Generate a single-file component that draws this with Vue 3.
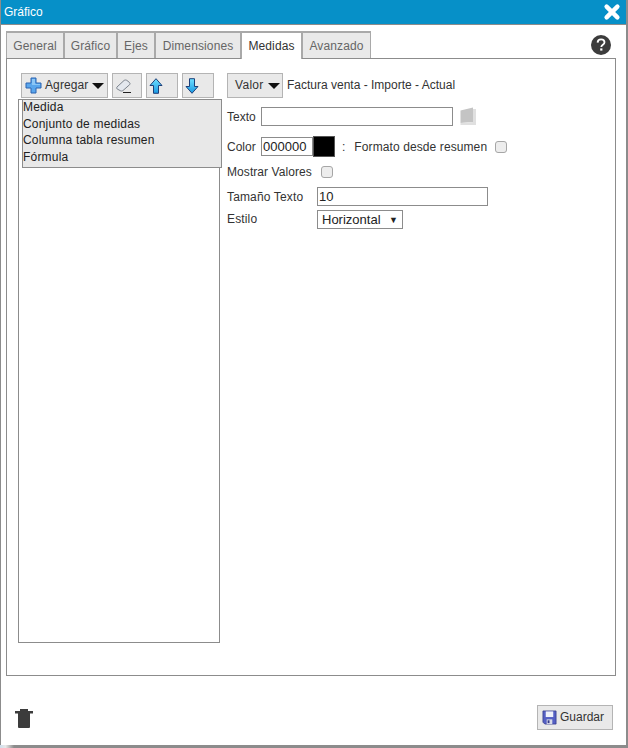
<script setup>
const tabs = [
  { label: 'General', w: 58 },
  { label: 'Gráfico', w: 53 },
  { label: 'Ejes', w: 38 },
  { label: 'Dimensiones', w: 86 },
  { label: 'Medidas', w: 61, active: true },
  { label: 'Avanzado', w: 69 }
]
const menu = ['Medida', 'Conjunto de medidas', 'Columna tabla resumen', 'Fórmula']
</script>

<template>
  <div class="dialog">
    <header class="titlebar">
      <span>Gráfico</span>
      <svg class="close" width="18" height="18" viewBox="0 0 18 18"><path d="M3.6 3.6 L14.4 14.4 M14.4 3.6 L3.6 14.4" stroke="#fff" stroke-width="4.4" stroke-linecap="round" /></svg>
    </header>
    <div class="body">
      <div class="tabbar">
        <button v-for="t in tabs" :key="t.label" class="tab" :class="{ active: t.active }" :style="{ width: t.w + 'px' }">{{ t.label }}</button>
        <svg class="help" width="20" height="20" viewBox="0 0 20 20">
          <circle cx="10" cy="10" r="10" fill="#3c3c3c" />
          <path d="M6.6 7.6 C6.7 5.4 8.2 4.3 10.1 4.3 C12.1 4.3 13.5 5.5 13.5 7.2 C13.5 9.7 10.3 9.8 10.3 12" fill="none" stroke="#fff" stroke-width="1.8" />
          <rect x="9.2" y="13.4" width="2.2" height="2.2" fill="#fff" />
        </svg>
      </div>
      <div class="panel">
        <div class="left">
          <div class="toolbar">
            <button class="btn add">
              <svg width="17" height="17" viewBox="0 0 17 17"><path d="M6 1 H11 V6 H16 V11 H11 V16 H6 V11 H1 V6 H6 Z" fill="#5aa6ec" stroke="#2a62b0" /><path d="M7 2 H10 V7 H15 V8 H7 Z" fill="#8cc6f5" /></svg>
              <span class="lift">Agregar</span><i class="caret"></i>
            </button>
            <button class="btn eraser">
              <svg width="15" height="14" viewBox="0 0 15 14"><path d="M1 8 L8 1.5 C9 0.8 10 0.8 11 1.5 L13.5 3.5 C14.2 4.2 14.2 5 13.5 5.8 L7 11.5 C6 12.2 5 12.2 4 11.5 L1.2 10 C0.6 9.4 0.5 8.6 1 8 Z" fill="#e4e8ee" stroke="#7b828c" /><path d="M7 13.5 H15" stroke="#222" /></svg>
            </button>
            <button class="btn arrow">
              <svg width="14" height="16" viewBox="0 0 14 16">
                <defs><linearGradient id="arrow-up" x1="0" y1="0" x2="0" y2="1"><stop offset="0" stop-color="#6fe0ff" /><stop offset="1" stop-color="#1a98e2" /></linearGradient></defs>
                <path d="M7 0.7 L13 7.5 H9.5 V15.3 H4.5 V7.5 H1 Z" fill="url(#arrow-up)" stroke="#1c3f7a" />
              </svg>
            </button>
            <button class="btn arrow">
              <svg width="14" height="16" viewBox="0 0 14 16">
                <defs><linearGradient id="arrow-down" x1="0" y1="0" x2="0" y2="1"><stop offset="0" stop-color="#6fe0ff" /><stop offset="1" stop-color="#1a98e2" /></linearGradient></defs>
                <path d="M7 15.3 L13 8.5 H9.5 V0.7 H4.5 V8.5 H1 Z" fill="url(#arrow-down)" stroke="#1c3f7a" />
              </svg>
            </button>
          </div>
          <div class="listbox"></div>
          <ul class="menu">
            <li v-for="m in menu" :key="m">{{ m }}</li>
          </ul>
        </div>
        <div class="right">
          <div class="valor-row">
            <button class="btn valor"><span class="lift">Valor</span><i class="caret"></i></button>
            <span class="value-name lift">Factura venta - Importe - Actual</span>
          </div>
          <div class="row texto-row">
            <label class="lab-texto">Texto</label>
            <input class="input texto" type="text" />
            <svg class="book" width="17" height="19" viewBox="0 0 17 19"><path d="M0.5 3.5 L13 0.5 V15 L0.5 16 Z" fill="#c4c4c4" /><path d="M13 2 H16 V18 H0.5 V16 L13 15 Z" fill="#e0e0e0" /></svg>
          </div>
          <div class="row color-row">
            <label class="lab-color">Color</label>
            <input class="input color" type="text" value="000000" />
            <span class="swatch"></span>
            <span class="colon">:</span>
            <span class="fmt-label">Formato desde resumen</span>
            <span class="check fmt"></span>
          </div>
          <div class="row mostrar-row">
            <span class="mostrar-label">Mostrar Valores</span>
            <span class="check mostrar"></span>
          </div>
          <div class="row size-row">
            <label class="lab-wide">Tamaño Texto</label>
            <input class="input size" type="text" value="10" />
          </div>
          <div class="row estilo-row">
            <label class="lab-wide lift">Estilo</label>
            <div class="select"><span>Horizontal</span><span class="sel-arrow">▼</span></div>
          </div>
        </div>
      </div>
      <footer class="footer">
        <svg class="trash" width="18" height="19" viewBox="0 0 18 19"><path d="M5 0 H13 V2 H18 V4.5 H15 V18 Q15 19 14 19 H4 Q3 19 3 18 V4.5 H0 V2 H5 Z" fill="#3c3c3c" /></svg>
        <button class="btn save">
          <svg width="15" height="15" viewBox="0 0 16 16"><path d="M1 1 H15 V15 H3 L1 13 Z" fill="#5560c4" stroke="#33398a" stroke-width="0.8" /><rect x="4" y="1.5" width="8" height="6" fill="#eef0fa" /><rect x="5" y="10" width="6" height="5" fill="#d8dbe8" /><rect x="6" y="11" width="2" height="3" fill="#33398a" /></svg>
          <span class="lift">Guardar</span>
        </button>
      </footer>
    </div>
    <span class="corner"></span>
  </div>
</template>

<style>
html, body { margin: 0; padding: 0; background: #fff; }
</style>

<style scoped>
.dialog {
  position: relative;
  width: 628px;
  height: 748px;
  box-sizing: border-box;
  display: flex;
  flex-direction: column;
  border-left: 1px solid #8c8c8c;
  border-right: 2px solid #8c8c8c;
  border-bottom: 3px solid #8c8c8c;
  font-family: "Liberation Sans", Arial, sans-serif;
  font-size: 12px;
  color: #333;
  background: #fff;
}
.corner {
  position: absolute;
  left: -1px;
  bottom: -3px;
  width: 14px;
  height: 3px;
  background: linear-gradient(90deg, #cfdfee, #e8e8e8 40%, #8c8c8c);
}
.titlebar {
  height: 24px;
  flex: none;
  box-sizing: content-box;
  background: #0690c8;
  border-bottom: 1px solid #8c8c8c;
  color: #fff;
  font-size: 12px;
  display: flex;
  align-items: center;
  justify-content: space-between;
  padding: 0 5px 0 3px;
}
.close { margin-top: -1px; }
.body {
  flex: 1;
  display: flex;
  flex-direction: column;
  padding: 6px 10px 0 5px;
  min-height: 0;
}
.tabbar {
  height: 27px;
  flex: none;
  display: flex;
  position: relative;
}
.tab {
  box-sizing: border-box;
  height: 27px;
  padding: 0;
  border: 2px solid #a9a9a9;
  border-bottom: 0;
  border-right-width: 1px;
  border-left-width: 1px;
  background: #e9e9e9;
  color: #666;
  font: 12px "Liberation Sans", Arial, sans-serif;
  letter-spacing: 0.12px;
}
.tab.active {
  background: #fff;
  color: #333;
  height: 28px;
  position: relative;
  z-index: 1;
}
.help { position: absolute; right: 5px; top: 4px; }
.panel {
  height: 618px;
  box-sizing: border-box;
  flex: none;
  border: 1px solid #8c8c8c;
  display: flex;
  padding: 14px 0 0 11px;
}
.left { width: 208px; flex: none; position: relative; }
.toolbar { display: flex; gap: 4px; height: 26px; padding-left: 3px; }
.btn {
  box-sizing: border-box;
  height: 25px;
  padding: 0;
  border: 1px solid #b4b4b4;
  background: #e9e9e9;
  color: #333;
  font: 12px "Liberation Sans", Arial, sans-serif;
  display: flex;
  align-items: center;
  justify-content: flex-start;
}
.lift { margin-bottom: 2px; }
.add { width: 87px; gap: 3px; letter-spacing: 0.1px; padding-left: 3px; }
.add .caret { margin-left: 1px; }
.eraser { width: 30px; padding-left: 3px; }
.arrow { width: 32px; padding-left: 2px; }
.caret {
  display: inline-block;
  width: 0;
  height: 0;
  border-left: 6.5px solid transparent;
  border-right: 6.5px solid transparent;
  border-top: 6px solid #111;
  margin-left: 4px;
}
.listbox {
  width: 202px;
  height: 544px;
  box-sizing: border-box;
  border: 1px solid #8c8c8c;
}
.menu {
  position: absolute;
  left: 4px;
  top: 26px;
  width: 200px;
  height: 69px;
  box-sizing: border-box;
  margin: 0;
  padding: 0;
  list-style: none;
  background: #e8e8e8;
  border: 1px solid #8c8c8c;
  color: #222;
  letter-spacing: 0.2px;
}
.menu li { height: 16.7px; line-height: 14.7px; }
.right { margin-left: -7px; padding-left: 8px; flex: 1; }
.valor-row { display: flex; align-items: center; height: 25px; gap: 4px; }
.valor { width: 56px; padding-left: 7px; letter-spacing: 0.3px; }
.value-name { color: #333; }
.row { display: flex; align-items: center; }
.texto-row { height: 19px; margin-top: 9px; }
.lab-texto { width: 34px; }
.input {
  box-sizing: border-box;
  height: 19px;
  padding: 0 1px 1px;
  border: 1px solid #8c8c8c;
  font: 13px "Liberation Sans", Arial, sans-serif;
  color: #222;
  background: #fff;
  outline: none;
  border-radius: 0;
}
.texto { width: 192px; }
.book { margin-left: 7px; }
.color-row { height: 21px; margin-top: 10px; }
.lab-color { width: 34px; }
.color { width: 52px; }
.swatch {
  box-sizing: border-box;
  width: 22px;
  height: 21px;
  background: #000;
  border: 1px solid #555;
}
.colon { margin: 0 9px 0 7px; }
.fmt-label { letter-spacing: 0.1px; }
.check {
  box-sizing: border-box;
  width: 12px;
  height: 12px;
  border: 1px solid #a6a6a6;
  border-radius: 3px;
  background: #ededed;
}
.fmt { margin-left: 8px; }
.mostrar-row { height: 16px; margin-top: 7px; }
.mostrar-label { letter-spacing: 0.07px; }
.mostrar { margin-left: 9px; }
.size-row { height: 19px; margin-top: 7px; }
.lab-wide { width: 90px; letter-spacing: 0.15px; }
.size { width: 171px; }
.estilo-row { height: 19px; margin-top: 4px; }
.select {
  box-sizing: border-box;
  width: 86px;
  height: 19px;
  border: 1px solid #8c8c8c;
  font-size: 13px;
  color: #222;
  display: flex;
  align-items: center;
  justify-content: space-between;
  padding: 0 4px;
}
.sel-arrow { font-size: 9px; }
.footer {
  flex: 1;
  display: flex;
  justify-content: space-between;
  align-items: flex-start;
  padding: 29px 3px 0 9px;
}
.trash { margin-top: 4px; }
.save { width: 76px; gap: 3px; padding-left: 4px; }
</style>
